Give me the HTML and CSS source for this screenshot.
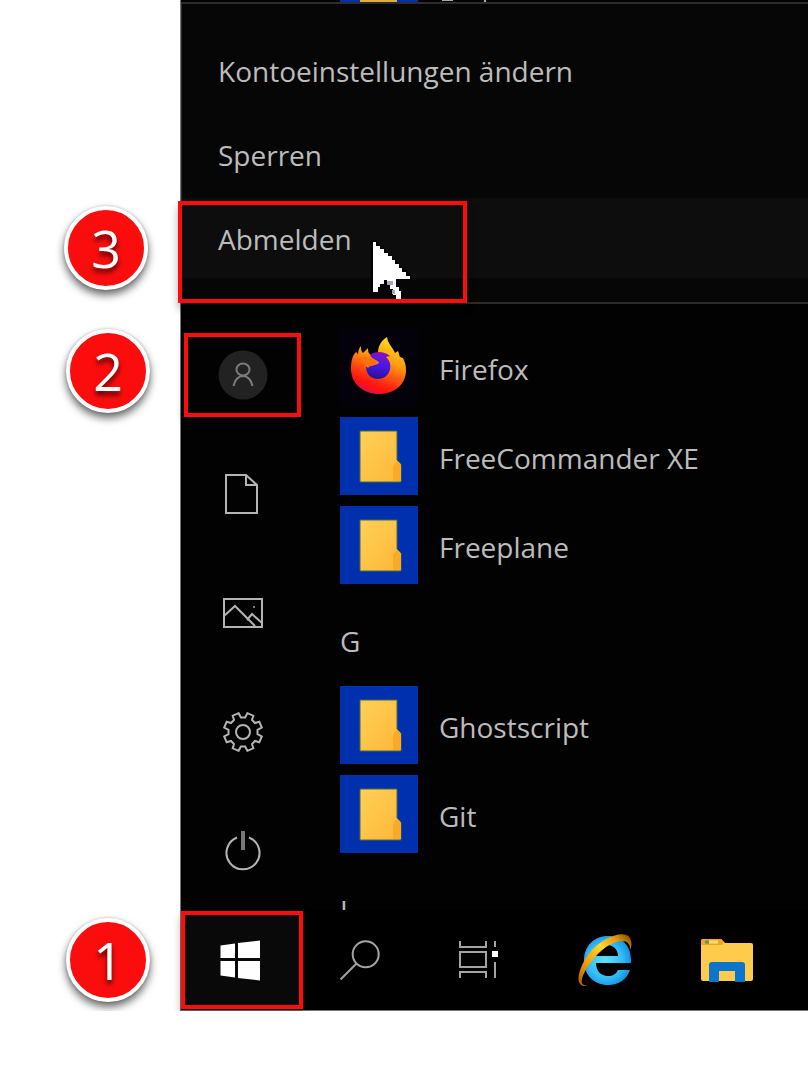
FILE: index.html
```html
<!DOCTYPE html>
<html lang="de">
<head>
<meta charset="utf-8">
<meta name="viewport" content="width=device-width, initial-scale=1">
<title>Abmelden</title>
<link rel="stylesheet" href="styles.css">
</head>
<body>
<svg class="defs" aria-hidden="true">
  <defs>
    <linearGradient id="paper" x1="0" y1="0" x2="1" y2="1"><stop offset="0" stop-color="#ffd058"/><stop offset="1" stop-color="#fdb736"/></linearGradient>
    <linearGradient id="fox" x1=".75" y1="0" x2=".35" y2="1"><stop offset="0" stop-color="#ffe21a"/><stop offset=".4" stop-color="#ff9a12"/><stop offset=".65" stop-color="#ff4a10"/><stop offset=".85" stop-color="#ff1410"/><stop offset="1" stop-color="#e0103c"/></linearGradient>
    <linearGradient id="globe" x1=".6" y1="0" x2=".4" y2="1"><stop offset="0" stop-color="#8c10c0"/><stop offset=".5" stop-color="#4518e8"/><stop offset="1" stop-color="#28128c"/></linearGradient>
    <radialGradient id="ie" cx=".45" cy=".5" r=".6"><stop offset="0" stop-color="#5fe2fa"/><stop offset=".6" stop-color="#35bdf5"/><stop offset="1" stop-color="#0d86e0"/></radialGradient>
    <linearGradient id="ring" x1="0" y1="1" x2="1" y2="0"><stop offset="0" stop-color="#a85c00"/><stop offset=".3" stop-color="#f59c08"/><stop offset=".6" stop-color="#ffd92e"/><stop offset=".8" stop-color="#e89a10"/><stop offset="1" stop-color="#704000"/></linearGradient>
    <symbol id="folder" viewBox="0 0 78 78">
      <rect width="78" height="78" fill="#0030ae"/>
      <path d="M20 14h37v29l4 4v18H20z" fill="url(#paper)" stroke="#456b45" stroke-width="1"/>
      <path d="M53 64V49l4-5 4 4v16z" fill="#f9aa27"/>
    </symbol>
  </defs>
</svg>
<main class="screen">
  <svg class="sliver" width="160" height="2" viewBox="0 0 160 2" aria-hidden="true"><path d="M0 0h78v2H0z" fill="#0030ae"/><path d="M20 0h37v2H20z" fill="#e0ad40"/><path d="M102 0h11v1h-11zM144 0h2v2h-2z" fill="#aaa"/></svg>

  <nav class="account" aria-label="Konto">
    <button class="account-item" type="button">Kontoeinstellungen ändern</button>
    <button class="account-item" type="button">Sperren</button>
    <div class="marked">
      <button class="account-item active" type="button">Abmelden</button>
      <svg class="cursor" width="44" height="64" viewBox="0 0 44 64" aria-hidden="true"><path d="M4 5h4l4 4 4 4 4 4 4 4 4 4 4 4 4 4 4 4 3 3v4H29v6l4 5v7h-7l-4-8v-6h-4l-5 4-4 5H4z" transform="translate(-2 -2)"/><path d="M4 5h3v4h4v3h4v4h4v3h4v4h3v4h4v4h3v4h4v4h4v3H27v8h3v4h2v8h-5v-4h-3v-6h-3v-6h-3v-3h-3v4h-4v3H9v5H4z" fill="#fff"/><path d="M18 44h6v4h-6zM23 53h3v4h-3z" fill="#a9a6b8"/></svg>
      <span class="frame frame-signout"></span>
      <span class="badge badge-signout">3</span>
    </div>
  </nav>

  <div class="start">
    <nav class="rail" aria-label="Startleiste">
      <div class="marked">
        <button class="rail-item" type="button" aria-label="Konto"><svg width="50" height="50" viewBox="0 0 50 50"><circle cx="25" cy="25" r="24.500" fill="#222"/><g class="line user"><ellipse cx="25" cy="19.500" rx="6.500" ry="6"/><path d="M15.500 36c1-6 5-10 9.500-10s8.500 4 9.500 10"/></g></svg></button>
        <span class="frame frame-user"></span>
        <span class="badge badge-user">2</span>
      </div>
      <button class="rail-item" type="button" aria-label="Dokumente"><svg width="40" height="40" viewBox="0 0 40 40"><g class="line"><path d="M3 1h20l11 10v28H3zM23 1v10h11"/></g></svg></button>
      <button class="rail-item" type="button" aria-label="Bilder"><svg width="40" height="40" viewBox="0 0 40 40"><g class="line"><path d="M1 6h38v28H1zM1 23l11-10 20 20M24 27l5-6 10 9"/></g><circle cx="31" cy="14" r="1" fill="#aaa"/></svg></button>
      <button class="rail-item" type="button" aria-label="Einstellungen"><svg width="40" height="40" viewBox="0 0 40 40"><g class="line"><circle cx="20" cy="20" r="7"/><path d="M17.900 5.500h4.200L24.400 1.200l5.900 2.500L29 8l3 3 4.300-1.300 2.500 5.900-4.300 2.300v4.200l4.300 2.300-2.500 5.900L32 29l-3 3 1.300 4.300-5.900 2.500-2.300-4.300h-4.200l-2.300 4.300-5.900-2.500L11 32l-3-3-4.300 1.300-2.500-5.900 4.300-2.300v-4.200l-4.300-2.300 2.500-5.900L8 11l3-3-1.300-4.300 5.900-2.500z"/></g></svg></button>
      <button class="rail-item" type="button" aria-label="Ein/Aus"><svg width="40" height="40" viewBox="0 0 40 40"><g class="line"><path d="M14 6.500a16.500 16.500 0 1 0 12 0"/></g><path d="M20 0v19" stroke="#777" stroke-width="4"/></svg></button>
    </nav>

    <div class="apps">
      <a class="app" href="#firefox"><svg width="78" height="78" viewBox="0 0 78 78" aria-hidden="true"><rect width="78" height="78" fill="#03010a"/><path d="M21 18c0 3 0 5 2 7l5-5c0 4 1 7 4 7l6-2c0-8 4-13 9-16 1 7 5 9 8 16l3-2c1 2 1 4 2 6l3 1c2 4 3 8 3 12 0 15-12 24-27 24S11 56 11 41c0-7 1-13 5-17 1 1 2 2 2 3 0-4 1-7 3-9z" fill="url(#fox)"/><path d="M30 27c5-4 14-4 20 1l-4 1c4 4 5 8 4 12-1 6-6 10-12 10-7 0-12-5-12-12 4-2 10-1 13-4 0-3-7-3-9-8z" fill="url(#globe)"/><path d="M19 31c7-4 13-1 19 3-2 4-8 3-10 6-3-3-4-6-9-9z" fill="#ff7208"/></svg><span>Firefox</span></a>
      <a class="app" href="#freecommander"><svg width="78" height="78" aria-hidden="true"><use href="#folder"/></svg><span>FreeCommander XE</span></a>
      <a class="app" href="#freeplane"><svg width="78" height="78" aria-hidden="true"><use href="#folder"/></svg><span>Freeplane</span></a>
      <div class="letter">G</div>
      <a class="app" href="#ghostscript"><svg width="78" height="78" aria-hidden="true"><use href="#folder"/></svg><span>Ghostscript</span></a>
      <a class="app" href="#git"><svg width="78" height="78" aria-hidden="true"><use href="#folder"/></svg><span>Git</span></a>
      <div class="letter-clip"><div class="letter">I</div></div>
    </div>
  </div>

  <footer class="taskbar">
    <div class="marked">
      <button class="task task-start" type="button" aria-label="Start"><svg width="120" height="100" viewBox="0 0 120 100"><path d="M39.500 35.500 54 33.500V48H39.500zM57 33l22-2.500V48H57zM39.500 51H54v16.500l-14.500-2zM57 51h22v19.500L57 68z" fill="#fff"/></svg></button>
      <span class="frame frame-start"></span>
      <span class="badge badge-start">1</span>
    </div>
    <button class="task" type="button" aria-label="Suche"><svg width="120" height="100" viewBox="0 0 120 100"><g class="line thin"><circle cx="64.700" cy="44.300" r="13"/><path d="M55.500 53.500l-16 16"/></g></svg></button>
    <button class="task" type="button" aria-label="Taskansicht"><svg width="120" height="100" viewBox="0 0 120 100"><g class="line thin"><path d="M39 31v6h26v-6M39 42h26v15H39zM39 68v-6h26v6M74 31v6M74 52v16"/></g><path d="M71 41h6v6h-6z" fill="#fff"/></svg></button>
    <button class="task" type="button" aria-label="Internet Explorer"><svg width="120" height="100" viewBox="0 0 120 100"><path d="M90 53H55c0 8 5 13 12 13 5 0 8-2 10-6h12c-3 9-11 15-22 15-14 0-24-10-24-24 0-15 10-25 24-25 14 0 23 10 23 24zM55 46h22c0-6-4-11-11-11-6 0-10 5-11 11z" fill="url(#ie)" fill-rule="evenodd"/><path d="M47 75c-11 5-14-10 0-30 13-18 37-26 42-17 2 4 2 8 0 12 1-11-11-12-24-3C54 45 43 60 41 69c-1 5 1 7 6 6z" fill="url(#ring)"/></svg></button>
    <button class="task" type="button" aria-label="Explorer"><svg width="120" height="100" viewBox="0 0 120 100"><path d="M40 31q0-2 2-2h18l4 4h26q2 0 2 2v34q0 2-2 2H42q-2 0-2-2z" fill="#ffcb4c"/><path d="M40 31q0-2 2-2h18l3 3-2 3H40z" fill="#f9a51b"/><path d="M48 30.500h9v3h-9z" fill="#ffdc72"/><path d="M44 30.500h4v3h-4z" fill="#4d9e60"/><path d="M48 72V55q0-3 3-3h30q3 0 3 3v17H74V61H58v11z" fill="#0b75cc"/></svg></button>
  </footer>
</main>
</body>
</html>
```
FILE: styles.css
```css
* {
  box-sizing: border-box;
}

body {
  margin: 0;
  background: #fff;
  color: #bcbcbc;
  font: 400 28px/40px "Open Sans", "Noto Sans", sans-serif;
}

button {
  margin: 0;
  padding: 0;
  border: 0;
  background: none;
  color: inherit;
  font: inherit;
  text-align: left;
}

svg {
  display: block;
}

.defs {
  position: absolute;
  width: 0;
  height: 0;
}

.screen {
  margin-left: 180px;
  border-left: 1px solid #777;
  border-bottom: 1px solid #777;
  background: #020202;
}

.sliver {
  margin-left: 159px;
}

.marked {
  position: relative;
}

/* Account flyout */
.account {
  display: flex;
  flex-direction: column;
  gap: 4px;
  padding: 26px 0 24px;
  border: solid #2c2c2c;
  border-width: 2px 0 2px 1px;
  background: #060606;
}

.account-item {
  display: block;
  width: 100%;
  height: 80px;
  padding: 2px 36px 0;
}

.active {
  background: #0d0d0d;
}

.cursor {
  position: absolute;
  left: 187px;
  top: 39px;
}

/* Start menu */
.start {
  display: flex;
}

.rail {
  display: flex;
  flex-direction: column;
  flex: 0 0 124px;
  padding-top: 11px;
}

.rail-item {
  display: flex;
  align-items: center;
  justify-content: center;
  width: 100%;
  height: 119px;
}

.line {
  fill: none;
  stroke: #b4b4b4;
  stroke-width: 2;
}

.user {
  stroke: #7c7c7c;
}

.thin {
  stroke: #a4a4a4;
}

.apps {
  display: flex;
  flex: 1;
  flex-direction: column;
  gap: 11px;
  padding: 24px 0 0 35px;
}

.app {
  display: flex;
  align-items: center;
  gap: 21px;
  height: 78px;
  color: inherit;
  text-decoration: none;
}

.app span {
  padding-top: 3px;
}

.letter {
  height: 80px;
  padding-top: 26px;
}

.letter-clip {
  height: 46px;
  overflow: hidden;
}

/* Taskbar */
.taskbar {
  display: flex;
  background: #000;
}

.task {
  display: block;
  width: 120px;
  height: 100px;
}

.task-start {
  background: #090909;
}

/* Step markers */
.frame {
  position: absolute;
  border: 4px solid #fb0d0d;
  box-shadow: 0 6px 8px rgba(0, 0, 0, .3);
  pointer-events: none;
}

.frame-signout {
  left: -4px;
  top: 3px;
  width: 289px;
  height: 102px;
}

.frame-user {
  left: 3px;
  top: 18px;
  width: 117px;
  height: 84px;
}

.frame-start {
  left: 0;
  top: 1px;
  width: 122px;
  height: 98px;
}

.badge {
  position: absolute;
  display: flex;
  align-items: center;
  justify-content: center;
  width: 84px;
  height: 84px;
  border: 4px solid #fff;
  border-radius: 50%;
  background: #fb0d0d;
  box-shadow: 0 5px 8px rgba(0, 0, 0, .6), 0 0 3px rgba(0, 0, 0, .2);
  color: #fff;
  font: 400 52px/60px "Open Sans", "Noto Sans", sans-serif;
  text-shadow: 0 4px 5px rgba(0, 0, 0, .7);
}

.badge-signout {
  left: -118px;
  top: 8px;
}

.badge-user {
  left: -115px;
  top: 14px;
}

.badge-start {
  left: -115px;
  top: 8px;
}
```
